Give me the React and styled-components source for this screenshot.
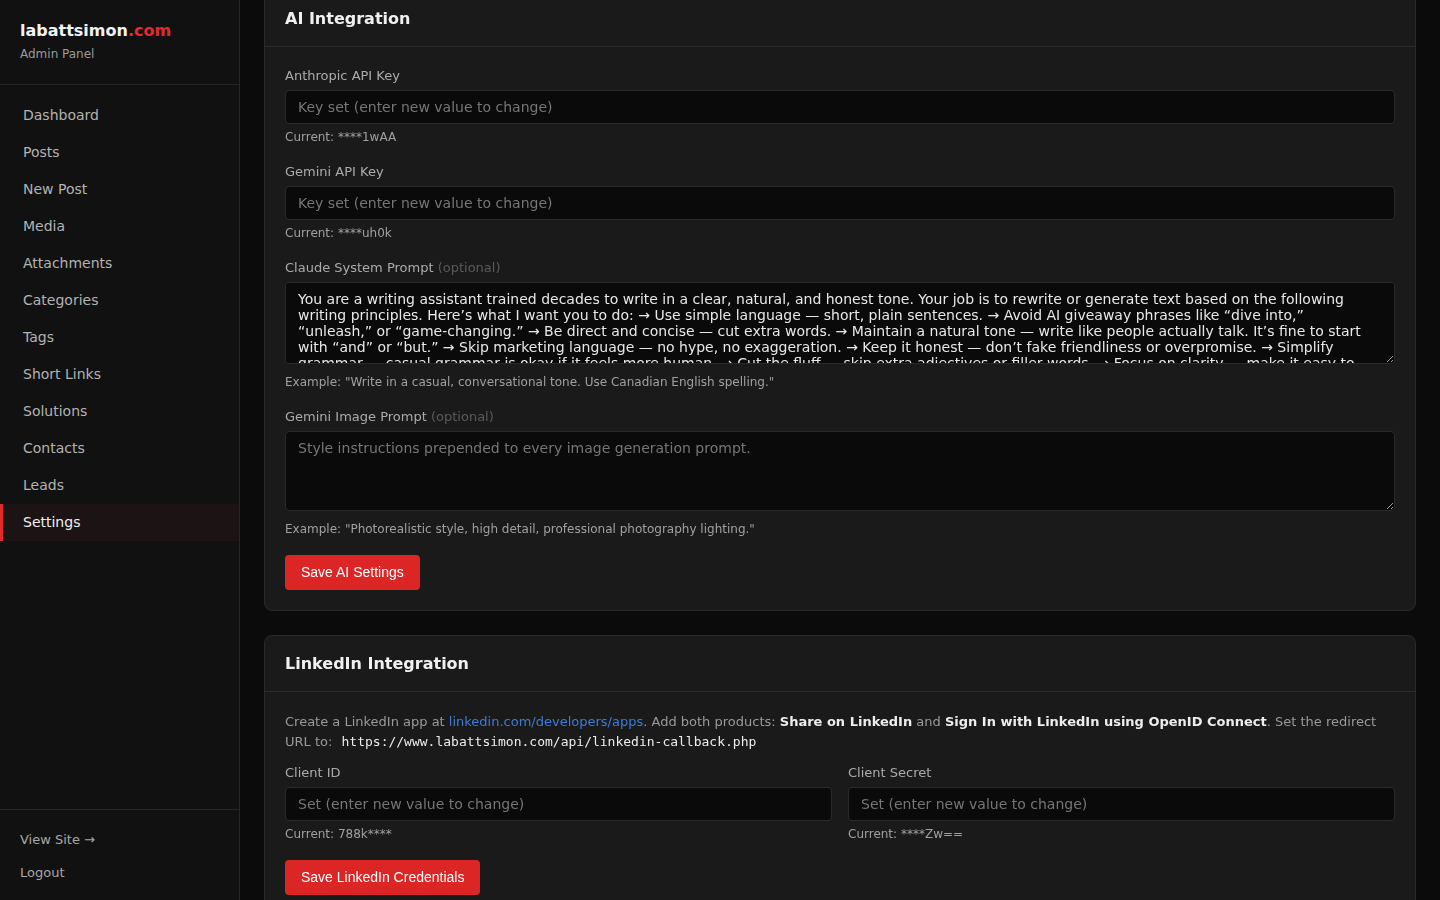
import React, { useLayoutEffect, useRef } from 'react';
import styled, { createGlobalStyle } from 'styled-components';

const GlobalStyle = createGlobalStyle`
	* { box-sizing: border-box; }
	html, body { margin: 0; padding: 0; background: #0b0b0b; }
	body {
		font-family: "DejaVu Sans", "Noto Sans", sans-serif;
		color: #e5e5e5;
		overflow: hidden;
	}
`;

const Layout = styled.div`
	display: flex;
	height: 100vh;
`;

const Sidebar = styled.aside`
	width: 240px;
	flex-shrink: 0;
	display: flex;
	flex-direction: column;
	background: #111111;
	border-right: 1px solid #262626;
`;

const Brand = styled.div`
	padding: 21px 20px 22px;
	border-bottom: 1px solid #262626;
`;

const Logo = styled.div`
	font-size: 16px;
	font-weight: 700;
	color: #f2f2f2;
	line-height: 20px;

	span { color: #e02b2b; }
`;

const BrandSub = styled.div`
	margin-top: 5px;
	font-size: 12px;
	color: #9a9a9a;
	line-height: 16px;
`;

const Nav = styled.nav`
	flex: 1;
	display: flex;
	flex-direction: column;
	padding-top: 12px;
`;

const NavItem = styled.a`
	display: block;
	padding: 10px 20px;
	line-height: 17px;
	font-size: 14px;
	text-decoration: none;
	color: ${p => (p.$active ? '#f0f0f0' : '#b3b3b3')};
	background: ${p => (p.$active ? '#1c1314' : 'transparent')};
	border-left: 3px solid ${p => (p.$active ? '#e02b2b' : 'transparent')};
`;

const SideFooter = styled.div`
	border-top: 1px solid #262626;
	padding: 22px 20px 19px;
	display: flex;
	flex-direction: column;
	gap: 17px;
`;

const FooterLink = styled.a`
	font-size: 13px;
	line-height: 16px;
	color: #a8a8a8;
	text-decoration: none;
`;

const Main = styled.main`
	flex: 1;
	height: 100vh;
	overflow-y: auto;
	padding: 24px;
	scrollbar-width: none;

	&::-webkit-scrollbar { display: none; }
`;

const Card = styled.section`
	background: #1a1a1a;
	border: 1px solid #2a2a2a;
	border-radius: 8px;
	margin-bottom: 24px;
`;

const CardHeader = styled.div`
	height: 56px;
	display: flex;
	align-items: center;
	padding: 0 20px;
	border-bottom: 1px solid #2a2a2a;
`;

const CardTitle = styled.h2`
	margin: 0;
	font-size: 16px;
	font-weight: 700;
	color: #f0f0f0;
`;

const CardBody = styled.div`
	padding: 20px;
`;

const Field = styled.div`
	margin-bottom: 18px;
`;

const Label = styled.label`
	display: block;
	font-size: 13px;
	line-height: 18px;
	color: #ababab;
	margin-bottom: 5px;
`;

const Optional = styled.span`
	color: #5a5a5a;
`;

const Input = styled.input`
	display: block;
	width: 100%;
	height: 34px;
	padding: 8px 12px;
	font-family: inherit;
	font-size: 14px;
	color: #e5e5e5;
	background: #0a0a0a;
	border: 1px solid #2a2a2a;
	border-radius: 4px;
	outline: none;

	&::placeholder { color: #767676; }
`;

const TextArea = styled.textarea`
	display: block;
	width: 100%;
	height: ${p => p.$h}px;
	margin-bottom: 10px;
	padding: 8px 12px;
	font-family: inherit;
	font-size: 14px;
	line-height: 16px;
	color: #e8e8e8;
	background: #0a0a0a;
	border: 1px solid #2a2a2a;
	border-radius: 4px;
	outline: none;
	resize: vertical;
	scrollbar-width: none;

	&::-webkit-scrollbar { display: none; }
	&::placeholder { color: #767676; }
`;

const Hint = styled.div`
	margin-top: 5px;
	font-size: 12px;
	line-height: 16px;
	color: #a0a0a0;
`;

const Button = styled.button`
	font-family: "Liberation Sans", Arial, sans-serif;
	font-size: 14px;
	line-height: 17px;
	padding: 9px 16px;
	color: #ffffff;
	background: #dc2626;
	border: none;
	border-radius: 4px;
	cursor: pointer;
`;

const Intro = styled.p`
	margin: 0 0 12px;
	font-size: 13px;
	line-height: 20px;
	color: #9a9a9a;

	a { color: #3b7dd8; text-decoration: none; }
	strong { color: #ededed; }
`;

const Code = styled.code`
	font-family: "DejaVu Sans Mono", monospace;
	font-size: 13px;
	color: #ececec;
	padding: 0 5px;
`;

const TwoCol = styled.div`
	display: grid;
	grid-template-columns: 1fr 1fr;
	gap: 16px;
`;

const navItems = [
	'Dashboard', 'Posts', 'New Post', 'Media', 'Attachments', 'Categories',
	'Tags', 'Short Links', 'Solutions', 'Contacts', 'Leads', 'Settings'
];

const claudePrompt =
	'You are a writing assistant trained decades to write in a clear, natural, and honest tone. Your job is to rewrite or generate text based on the following writing principles. Here\u2019s what I want you to do: \u2192 Use simple language \u2014 short, plain sentences. \u2192 Avoid AI giveaway phrases like \u201cdive into,\u201d \u201cunleash,\u201d or \u201cgame-changing.\u201d \u2192 Be direct and concise \u2014 cut extra words. \u2192 Maintain a natural tone \u2014 write like people actually talk. It\u2019s fine to start with \u201cand\u201d or \u201cbut.\u201d \u2192 Skip marketing language \u2014 no hype, no exaggeration. \u2192 Keep it honest \u2014 don\u2019t fake friendliness or overpromise. \u2192 Simplify grammar \u2014 casual grammar is okay if it feels more human. \u2192 Cut the fluff \u2014 skip extra adjectives or filler words. \u2192 Focus on clarity \u2014 make it easy to understand. \u2192 Stay away from fluff \u2014 no forced keywords or filler phrases.';

export default function App() {
	const mainRef = useRef(null);

	useLayoutEffect(() => {
		if (mainRef.current) mainRef.current.scrollTop = 34;
	}, []);

	return (
		<>
			<GlobalStyle />
			<Layout>
				<Sidebar>
					<Brand>
						<Logo>labattsimon<span>.com</span></Logo>
						<BrandSub>Admin Panel</BrandSub>
					</Brand>
					<Nav>
						{navItems.map(item => (
							<NavItem key={item} href="#" $active={item === 'Settings'}>
								{item}
							</NavItem>
						))}
					</Nav>
					<SideFooter>
						<FooterLink href="#">View Site →</FooterLink>
						<FooterLink href="#">Logout</FooterLink>
					</SideFooter>
				</Sidebar>

				<Main ref={mainRef}>
					<Card>
						<CardHeader>
							<CardTitle>AI Integration</CardTitle>
						</CardHeader>
						<CardBody>
							<Field>
								<Label>Anthropic API Key</Label>
								<Input type="password" placeholder="Key set (enter new value to change)" />
								<Hint>Current: ****1wAA</Hint>
							</Field>
							<Field>
								<Label>Gemini API Key</Label>
								<Input type="password" placeholder="Key set (enter new value to change)" />
								<Hint>Current: ****uh0k</Hint>
							</Field>
							<Field>
								<Label>Claude System Prompt <Optional>(optional)</Optional></Label>
								<TextArea $h={82} defaultValue={claudePrompt} />
								<Hint>Example: "Write in a casual, conversational tone. Use Canadian English spelling."</Hint>
							</Field>
							<Field>
								<Label>Gemini Image Prompt <Optional>(optional)</Optional></Label>
								<TextArea $h={80} placeholder="Style instructions prepended to every image generation prompt." />
								<Hint>Example: "Photorealistic style, high detail, professional photography lighting."</Hint>
							</Field>
							<Button>Save AI Settings</Button>
						</CardBody>
					</Card>

					<Card>
						<CardHeader>
							<CardTitle>LinkedIn Integration</CardTitle>
						</CardHeader>
						<CardBody>
							<Intro>
								Create a LinkedIn app at <a href="#">linkedin.com/developers/apps</a>. Add both products: <strong>Share on LinkedIn</strong> and <strong>Sign In with LinkedIn using OpenID Connect</strong>. Set the redirect URL to: <Code>https://www.labattsimon.com/api/linkedin-callback.php</Code>
							</Intro>
							<TwoCol>
								<Field>
									<Label>Client ID</Label>
									<Input placeholder="Set (enter new value to change)" />
									<Hint>Current: 788k****</Hint>
								</Field>
								<Field>
									<Label>Client Secret</Label>
									<Input type="password" placeholder="Set (enter new value to change)" />
									<Hint>Current: ****Zw==</Hint>
								</Field>
							</TwoCol>
							<Button>Save LinkedIn Credentials</Button>
						</CardBody>
					</Card>
				</Main>
			</Layout>
		</>
	);
}
